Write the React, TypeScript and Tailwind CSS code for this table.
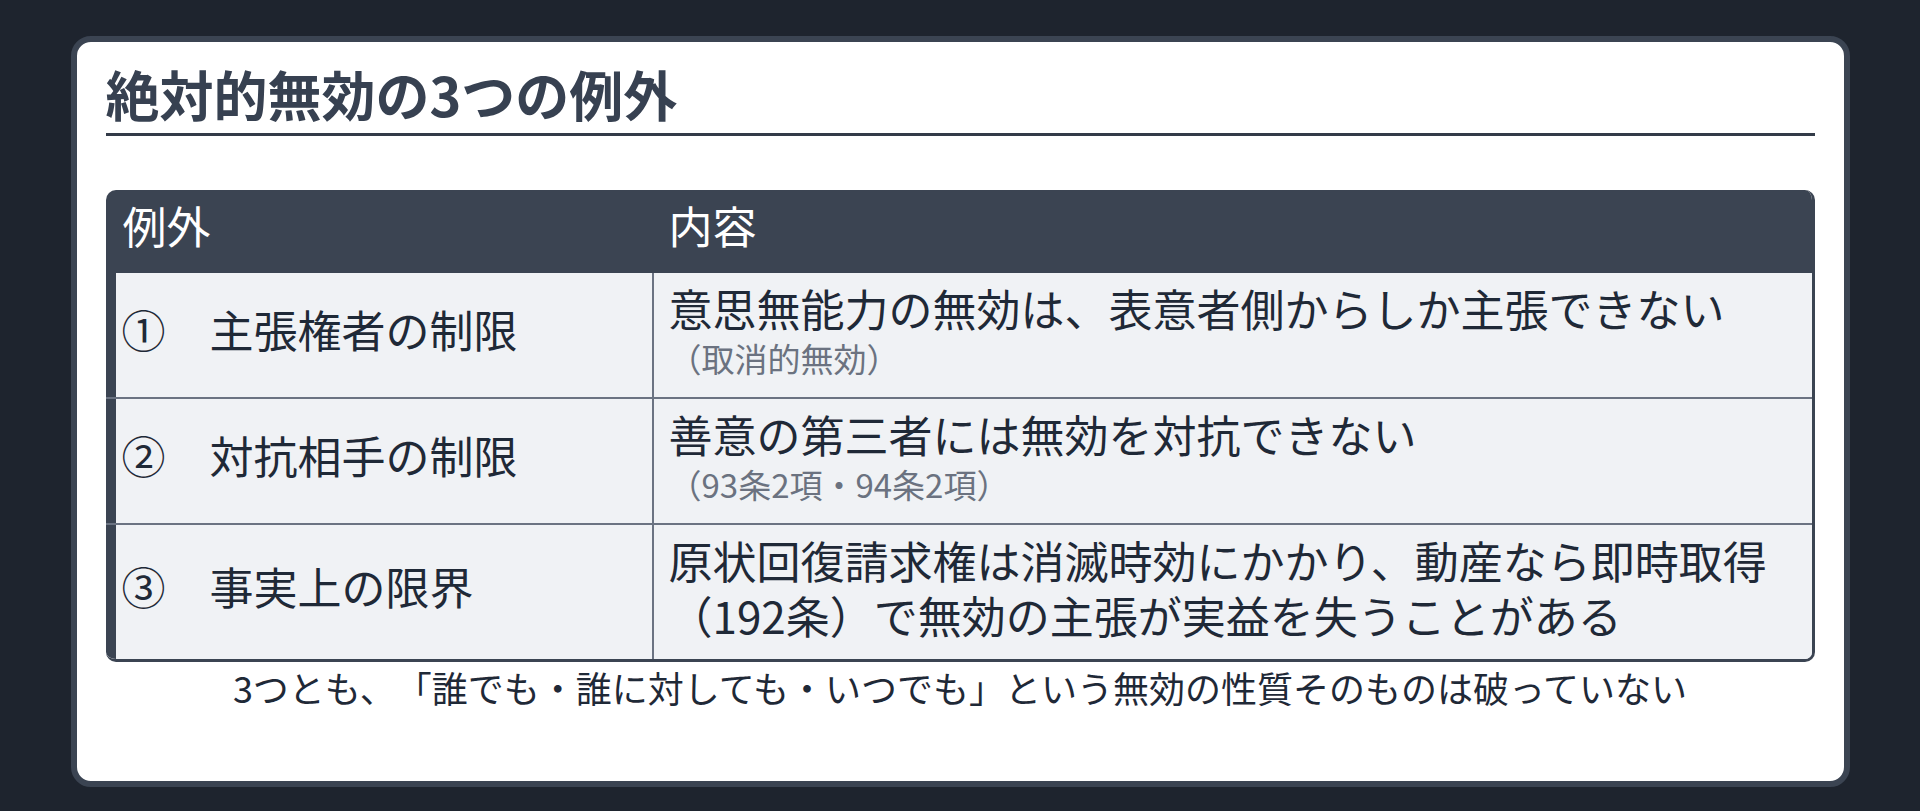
import React from 'react';

type Row = {
    label: string;
    lines: string[];
    note?: string;
};

const ROWS: Row[] = [
    {
        label: '①　主張権者の制限',
        lines: ['意思無能力の無効は、表意者側からしか主張できない'],
        note: '（取消的無効）',
    },
    {
        label: '②　対抗相手の制限',
        lines: ['善意の第三者には無効を対抗できない'],
        note: '（93条2項・94条2項）',
    },
    {
        label: '③　事実上の限界',
        lines: [
            '原状回復請求権は消滅時効にかかり、動産なら即時取得',
            '（192条）で無効の主張が実益を失うことがある',
        ],
    },
];

const ExceptionRow = ({ row, first }: { row: Row; first: boolean }) => (
    <div className={`flex bg-[#f0f2f5] ${first ? '' : 'border-t-2 border-[#6b7382]'}`}>
        <div className="w-[546px] shrink-0 border-l-[10px] border-[#3b4452] pl-[6px] pb-[10px] flex items-center text-[44px] leading-[1.25] text-[#1f2937]">
            {row.label}
        </div>
        <div className="flex-1 border-l-2 border-[#6b7382] pl-[15px] pr-4 pt-[8px] pb-[16px]">
            <p className="text-[44px] leading-[1.25] text-[#1f2937]">
                {row.lines.map((line, i) => (
                    <React.Fragment key={i}>
                        {i > 0 && <br />}
                        {line}
                    </React.Fragment>
                ))}
            </p>
            {row.note && (
                <p className="text-[33px] leading-[45px] text-[#6b7280]">{row.note}</p>
            )}
        </div>
    </div>
);

export default function App() {
    return (
        <div className="h-[811px] w-full overflow-hidden bg-[#1e242e] pt-[36px] font-['Noto_Sans_CJK_JP','Noto_Sans',sans-serif] [text-spacing-trim:space-all]">
            <div className="mx-auto h-[751px] w-[1779px] rounded-[20px] border-[6px] border-[#3b4452] bg-white px-[29px] pt-[18px]">
                <h1 className="border-b-[3px] border-[#333b48] pb-[5px] text-[54px] font-bold leading-[1.25] text-[#374151]">
                    絶対的無効の3つの例外
                </h1>

                <div className="mt-[54px] overflow-hidden rounded-[10px] border-r-[3px] border-b-[3px] border-[#3b4452]">
                    <div className="flex bg-[#3b4452] text-[44px] leading-[1.25] text-white">
                        <div className="w-[546px] shrink-0 pl-[17px] pt-2 pb-5">例外</div>
                        <div className="flex-1 pl-[17px] pt-2 pb-5">内容</div>
                    </div>
                    {ROWS.map((row, i) => (
                        <ExceptionRow key={i} row={row} first={i === 0} />
                    ))}
                </div>

                <p className="mt-[3px] text-center text-[36px] leading-[1.25] text-[#1f2937]">
                    3つとも、「誰でも・誰に対しても・いつでも」という無効の性質そのものは破っていない
                </p>
            </div>
        </div>
    );
}
